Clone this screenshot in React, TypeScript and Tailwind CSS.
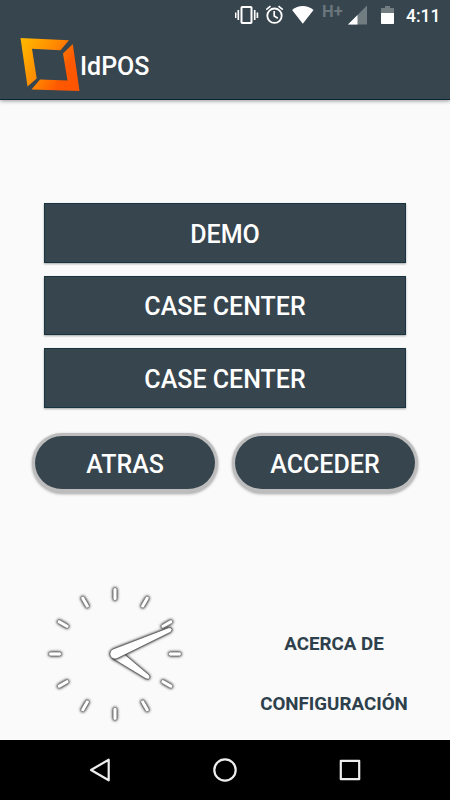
import React from "react";

const ticks = [0, 30, 60, 90, 120, 150, 180, 210, 240, 270, 300, 330];
const companies = ["DEMO", "CASE CENTER", "CASE CENTER"];

const StatusBar: React.FC = () => {
    return (
        <div className="h-[30px] flex items-start justify-end pr-[11px] text-white">
            <svg width="24" height="30" viewBox="0 0 24 30" className="mr-[7px]">
                <rect x="6.500" y="7" width="10" height="16" rx=".8" fill="none" stroke="#fff" strokeWidth="2" />
                <path d="M3.300 10v10M19.700 10v10M.6 12.500v5.500M22.400 12.500v5.500" stroke="#fff" strokeWidth="1.700" />
            </svg>
            <svg width="18" height="30" viewBox="0 0 18 30" className="mr-[8px]">
                <circle cx="8.500" cy="15.700" r="7.200" fill="none" stroke="#fff" strokeWidth="1.800" />
                <path d="M.2 9.700L4.500 6.200M16.800 9.700L12.500 6.200M8.200 11v5l3.600 2.200" fill="none" stroke="#fff" strokeWidth="1.700" />
            </svg>
            <svg width="22" height="30" viewBox="0 0 22 30" className="mr-[8px]">
                <path d="M.1 9.900C3.300 7.300 6.800 6 10.800 6s7.500 1.300 10.700 3.900L10.800 23.800z" fill="#fff" />
            </svg>
            <span className="mt-[2px] w-[26px] text-[16.500px] leading-[20px] font-bold text-[#6b767c]">H+</span>
            <svg width="19" height="30" viewBox="0 0 19 30" className="mr-[14px]">
                <path d="M19 5.500V24.500H0z" fill="#727d82" />
                <path d="M9.500 15v9.500H0z" fill="#fff" />
            </svg>
            <svg width="13" height="30" viewBox="0 0 13 30" className="mr-[12px]">
                <path d="M4 6h5v2h4v5H0V8h4z" fill="#727d82" />
                <path d="M0 13h13v10.300q0 .7-.7.7H.7Q0 24 0 23.300z" fill="#fff" />
            </svg>
            <span className="mt-[5px] w-[33px] whitespace-nowrap text-[17.500px] leading-[22px] font-medium">4:11</span>
        </div>
    );
};

const Logo: React.FC = () => {
    return (
        <svg width="60" height="56" viewBox="0 0 60 56">
            <defs>
                <linearGradient id="logo" gradientUnits="userSpaceOnUse" x1="2" y1="10" x2="56" y2="40">
                    <stop offset="0" stopColor="#ffb300" />
                    <stop offset=".45" stopColor="#ff8a00" />
                    <stop offset=".8" stopColor="#ff5a00" />
                    <stop offset="1" stopColor="#ff5500" />
                </linearGradient>
            </defs>
            <path d="M.5 1L49 3.200L40.500 13.300L12 11.700L16.700 41.500L7.500 49.500z" fill="url(#logo)" />
            <path d="M52.800 7L59.500 54L11.500 52.500L20 42.500L47.500 43.500L43 16.500z" fill="url(#logo)" />
        </svg>
    );
};

const Clock: React.FC = () => {
    return (
        <svg width="150" height="150" viewBox="-75 -75 150 150">
            <defs>
                <filter id="glow" filterUnits="userSpaceOnUse" x="-75" y="-75" width="150" height="150" colorInterpolationFilters="sRGB">
                    <feDropShadow dx="0" dy="0" stdDeviation="1.700" floodColor="#000" floodOpacity="1" />
                </filter>
            </defs>
            <g filter="url(#glow)">
                {ticks.map((angle) => (
                    <rect
                        key={angle}
                        x="-1.900"
                        y="-66.300"
                        width="3.800"
                        height="12.800"
                        rx="1.800"
                        fill="#fff"
                        stroke="#777"
                        strokeWidth=".7"
                        transform={`rotate(${angle})`}
                    />
                ))}
            </g>
            <g fill="#fff" stroke="#555" strokeWidth=".7">
                <path filter="url(#glow)" d="M-2.500 4.400L31 24.800Q34 26 34.900 23.800Q35.300 22 33.500 20.500L8-1z" />
                <path filter="url(#glow)" d="M-1.800-5L53.500-26.200Q56.500-26.800 57-24.800Q57.300-22.800 55-21.500L2 4.600A5.100 5.100 0 1 1-1.800-5z" />
            </g>
        </svg>
    );
};

const App: React.FC = () => {
    return (
        <div className="w-[450px] h-[800px] flex flex-col overflow-hidden bg-[#fafafa] font-[Roboto,sans-serif]">
            <header className="h-[100px] shrink-0 bg-[#37454f] border-b border-[#062733] shadow-[0_1px_4px_rgba(0,0,0,0.4)]">
                <StatusBar />
                <div className="flex items-start pl-[20px] pt-[7px]">
                    <Logo />
                    <h1 className="mt-[15px] text-[25px] leading-[30px] font-medium text-white">IdPOS</h1>
                </div>
            </header>

            <main className="flex-1 flex flex-col pt-[103px]">
                <div className="flex flex-col gap-[13px] px-[44px]">
                    {companies.map((company, i) => (
                        <button
                            key={i}
                            className="h-[59.500px] pt-[4px] bg-[#37454f] border border-[#173440] text-white text-[25px] leading-[30px] font-medium shadow-[0_1px_2px_rgba(0,0,0,0.35)]"
                        >
                            {company}
                        </button>
                    ))}
                </div>

                <div className="mt-[25.500px] flex gap-[14px] pl-[32px]">
                    <button className="w-[186px] h-[60px] pt-[4px] rounded-full border-[3px] border-b-[4px] border-[#bdbdbd] bg-[#37454f] text-white text-[25px] leading-[30px] font-medium shadow-[0_1px_3px_rgba(0,0,0,0.35)]">
                        ATRAS
                    </button>
                    <button className="w-[186px] h-[60px] pt-[4px] rounded-full border-[3px] border-b-[4px] border-[#bdbdbd] bg-[#37454f] text-white text-[25px] leading-[30px] font-medium shadow-[0_1px_3px_rgba(0,0,0,0.35)]">
                        ACCEDER
                    </button>
                </div>

                <div className="mt-[86px] flex items-start pl-[40px]">
                    <Clock />
                    <div className="ml-[54px] mt-[35px] w-[180px] flex flex-col text-center text-[18.750px] font-bold text-[#2d404c]">
                        <button className="h-[60px]">ACERCA DE</button>
                        <button className="h-[60px]">CONFIGURACIÓN</button>
                    </div>
                </div>
            </main>

            <nav className="h-[60px] shrink-0 flex items-center bg-black px-[88px] justify-between">
                <svg width="24" height="26" viewBox="0 0 24 26" fill="none" stroke="#eee" strokeWidth="2.200" strokeLinejoin="round">
                    <path d="M20.700 2.700v20.600L3 13z" />
                </svg>
                <svg width="26" height="26" viewBox="0 0 26 26" fill="none" stroke="#eee" strokeWidth="2.200">
                    <circle cx="13" cy="13" r="10.700" />
                </svg>
                <svg width="24" height="26" viewBox="0 0 24 26" fill="none" stroke="#eee" strokeWidth="2.200" strokeLinejoin="round">
                    <rect x="2.800" y="3.800" width="18.400" height="18.400" />
                </svg>
            </nav>
        </div>
    );
};

export default App;
